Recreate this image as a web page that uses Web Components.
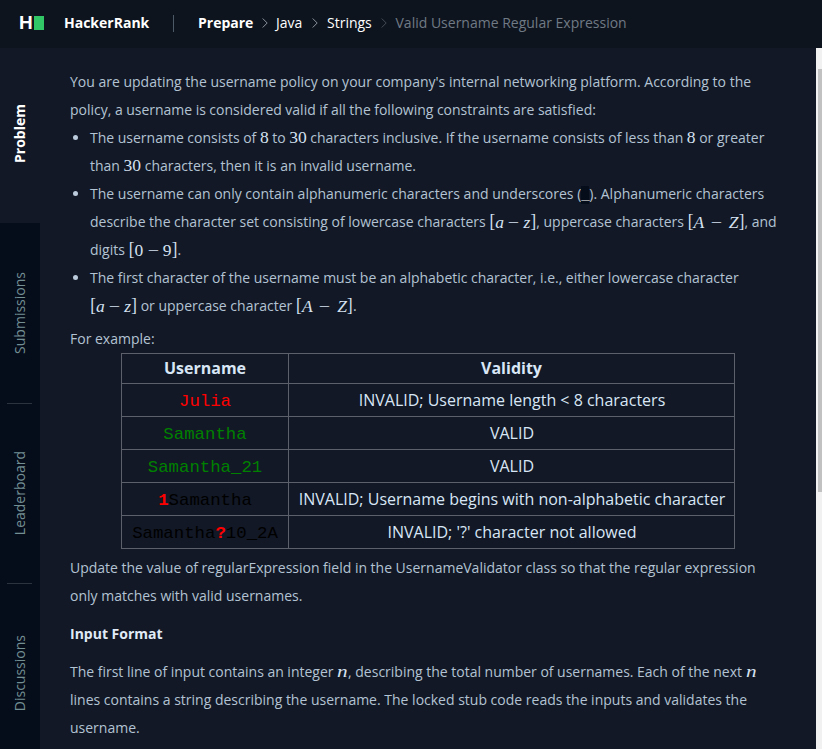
<!DOCTYPE html>
<html lang="en"><head><meta charset="utf-8"><title>Valid Username Regular Expression</title>
<style>
html,body{margin:0;height:100%;overflow:hidden;background:#121826;font-family:"Open Sans","Noto Sans",sans-serif}
</style></head><body>
<hr-app></hr-app>
<script>
const define=(name,html)=>customElements.define(name,class extends HTMLElement{
  constructor(){super();this.attachShadow({mode:'open'}).innerHTML=html;}
});
define('hr-logo',`<style>:host{display:flex;align-items:center;gap:2px;width:24px;height:14px;color:#fff;font:bold 19px/14px "Liberation Sans",sans-serif}
span{display:block;width:12px;text-indent:-1px}i{display:block;width:10px;height:14px;background:#32c766}</style><span>H</span><i></i>`);
define('hr-chevron',`<style>:host{display:block;width:6px;height:10px}svg{display:block}</style><svg width="6" height="10" viewBox="0 0 6 10" fill="none" stroke="currentColor"><path d="M.7.5 5.2 5 .7 9.5"/></svg>`);
define('hr-header',`<style>:host{display:flex;align-items:center;height:48px;padding-left:20px;box-sizing:border-box;background:#0e141e;color:#fff;font-size:14px;line-height:20px;font-weight:500;white-space:nowrap}
b{font-weight:700}.m{padding-bottom:2px;box-sizing:border-box}.brand{margin-left:20px;width:85px}.bar{width:1px;height:17px;background:#4c5966;margin:0 24px 2px 24px}
.a{width:55px}.b{width:28px}.c{width:45px}.last{color:#707a85;font-weight:400;margin-left:.5px}
hr-logo{margin-bottom:2px}hr-chevron{color:#8a949f;margin:0 8px 2px 9px}.b + hr-chevron{margin-left:8px;margin-right:9px}.dim{color:#434c58;margin-left:9px}</style>
<hr-logo></hr-logo><b class="m brand">HackerRank</b><div class="bar"></div><b class="m a">Prepare</b><hr-chevron></hr-chevron><span class="m b">Java</span><hr-chevron></hr-chevron><span class="m c">Strings</span><hr-chevron class="dim"></hr-chevron><span class="m last">Valid Username Regular Expression</span>`);
define('hr-tab',`<style>:host{display:flex;align-items:center;justify-content:center;height:180px;flex:none;box-sizing:border-box;background:#050c1a;color:#738f93;font-size:14px;line-height:20px;position:relative}
:host([active]){height:175px;padding-bottom:5px;background:#121826;color:#fff;font-weight:700}
:host([ruled])::before{content:"";position:absolute;left:7px;right:8px;top:0;height:1px;background:#2b333e}
span{writing-mode:vertical-rl;transform:rotate(180deg)}</style><span><slot></slot></span>`);
define('hr-sidebar',`<style>:host{display:flex;flex-direction:column;width:40px;overflow:hidden;background:#050c1a}</style>
<hr-tab active>Problem</hr-tab><hr-tab>Submissions</hr-tab><hr-tab ruled>Leaderboard</hr-tab><hr-tab ruled>Discussions</hr-tab>`);
define('hr-scrollbar',`<style>:host{display:block;width:6px;padding:21px 0 0 2px;box-sizing:border-box;background:#f1f1f1}i{display:block;height:423px;background:#c1c1c1}</style><i></i>`);
define('math-num',`<style>:host{display:inline-block;line-height:20px;font-family:"Liberation Serif",serif;font-size:17.5px;color:#d5e1f0;white-space:nowrap}</style><slot></slot>`);
define('math-var',`<style>:host{display:inline-block;width:11px;font:italic 17px/20px "Liberation Serif",serif;color:#d5e1f0}span{display:inline-block;transform:scaleX(1.25);transform-origin:0 0}</style><span><slot></slot></span>`);
define('math-range',`<style>:host{display:inline-flex;align-items:center;width:45px;height:20px;margin:0 1px;vertical-align:1px;line-height:20px;font-family:"Liberation Serif",serif;font-size:17.5px;color:#d5e1f0}
:host([wide]){width:55px}:host([num]){width:47px}
i{flex:1;text-align:center;display:flex;align-items:center;justify-content:space-between;padding:0 1px;font-size:17.5px}:host([num]) i{font-style:normal}
b{font-weight:400;width:4px;height:17px;font-size:17px;line-height:15px;transform:scaleY(1.12);display:flex;justify-content:center}
.m{width:11px;text-align:center;transform:scaleX(1.15);font-style:normal}</style>
<b>[</b><i><slot name="a"></slot><span class="m">−</span><slot name="z"></slot></i><b>]</b>`);
define('hr-line',`<style>:host{display:block;height:28px;white-space:nowrap}:host([tight]){word-spacing:-.15px}:host([tight=half]){word-spacing:-.06px}</style><slot></slot>`);
define('hr-item',`<style>:host{display:block;margin-left:20px;position:relative}:host::before{content:"";position:absolute;left:-17px;top:11px;width:5px;height:5px;border-radius:50%;background:#bccbdb}</style><slot></slot>`);
define('user-name',`<style>:host{font-family:"Liberation Mono",monospace;font-size:17.35px;line-height:24px;display:block;color:#000;padding-top:2px;margin-bottom:-2px}
:host([tone=red]),::slotted(em){color:#f00;font-style:normal}:host([tone=green]){color:#008000}::slotted(em){font-weight:700}</style><slot></slot>`);
define('hr-table',`<style>:host{display:block;width:614px;margin-left:51px}table{border-collapse:collapse;table-layout:fixed;width:614px;color:#d8e6f5;font-size:16px;line-height:24px;text-align:center}
td,th{border:1px solid #5b606b;padding:0;height:32px;white-space:nowrap}th{height:27px;padding-bottom:2px;line-height:22px}td:last-child{padding-left:1px}</style>
<table><colgroup><col style="width:167px"><col></colgroup>
<tr><th>Username</th><th>Validity</th></tr>
<tr><td><user-name tone="red">Julia</user-name></td><td>INVALID; Username length &lt; 8 characters</td></tr>
<tr><td><user-name tone="green">Samantha</user-name></td><td>VALID</td></tr>
<tr><td><user-name tone="green">Samantha_21</user-name></td><td>VALID</td></tr>
<tr><td><user-name><em>1</em>Samantha</user-name></td><td>INVALID; Username begins with non-alphabetic character</td></tr>
<tr><td><user-name>Samantha<em>?</em>10_2A</user-name></td><td>INVALID; '?' character not allowed</td></tr></table>`);
define('hr-problem',`<style>:host{display:block;flex:1;padding:20px 0 0 30px;box-sizing:border-box;color:#b3c3d3;font-size:14px;line-height:28px;overflow:hidden}
.ex{margin-top:5px}.up{margin-top:5px}.h{margin:10px 0;color:#e0ebf7;font-weight:700}code{font:14px/18px "Liberation Mono",monospace;background:#050c1a;color:#fff;display:inline-block;width:8px;text-align:center}</style>
<hr-line>You are updating the username policy on your company's internal networking platform. According to the</hr-line>
<hr-line tight>policy, a username is considered valid if all the following constraints are satisfied:</hr-line>
<hr-item><hr-line tight="half">The username consists of <math-num>8</math-num> to <math-num>30</math-num> characters inclusive. If the username consists of less than <math-num>8</math-num> or greater</hr-line>
<hr-line>than <math-num>30</math-num> characters, then it is an invalid username.</hr-line></hr-item>
<hr-item><hr-line>The username can only contain alphanumeric characters and underscores (<code>_</code>). Alphanumeric characters</hr-line>
<hr-line tight="half">describe the character set consisting of lowercase characters <math-range><span slot="a">a</span><span slot="z">z</span></math-range>, uppercase characters <math-range wide><span slot="a">A</span><span slot="z">Z</span></math-range>, and</hr-line>
<hr-line>digits <math-range num><span slot="a">0</span><span slot="z">9</span></math-range>.</hr-line></hr-item>
<hr-item><hr-line tight>The first character of the username must be an alphabetic character, i.e., either lowercase character</hr-line>
<hr-line><math-range><span slot="a">a</span><span slot="z">z</span></math-range> or uppercase character <math-range wide><span slot="a">A</span><span slot="z">Z</span></math-range>.</hr-line></hr-item>
<hr-line class="ex">For example:</hr-line>
<hr-table></hr-table>
<hr-line class="up" tight="half">Update the value of regularExpression field in the UsernameValidator class so that the regular expression</hr-line>
<hr-line>only matches with valid usernames.</hr-line>
<hr-line class="h">Input Format</hr-line>
<hr-line tight="half">The first line of input contains an integer <math-var>n</math-var>, describing the total number of usernames. Each of the next <math-var>n</math-var></hr-line>
<hr-line>lines contains a string describing the username. The locked stub code reads the inputs and validates the</hr-line>
<hr-line>username.</hr-line>`);
define('hr-app',`<style>:host{display:flex;flex-direction:column;height:749px;width:822px;overflow:hidden}main{display:flex;flex:1;min-height:0}</style>
<hr-header></hr-header><main><hr-sidebar></hr-sidebar><hr-problem></hr-problem><hr-scrollbar></hr-scrollbar></main>`);
</script></body></html>
